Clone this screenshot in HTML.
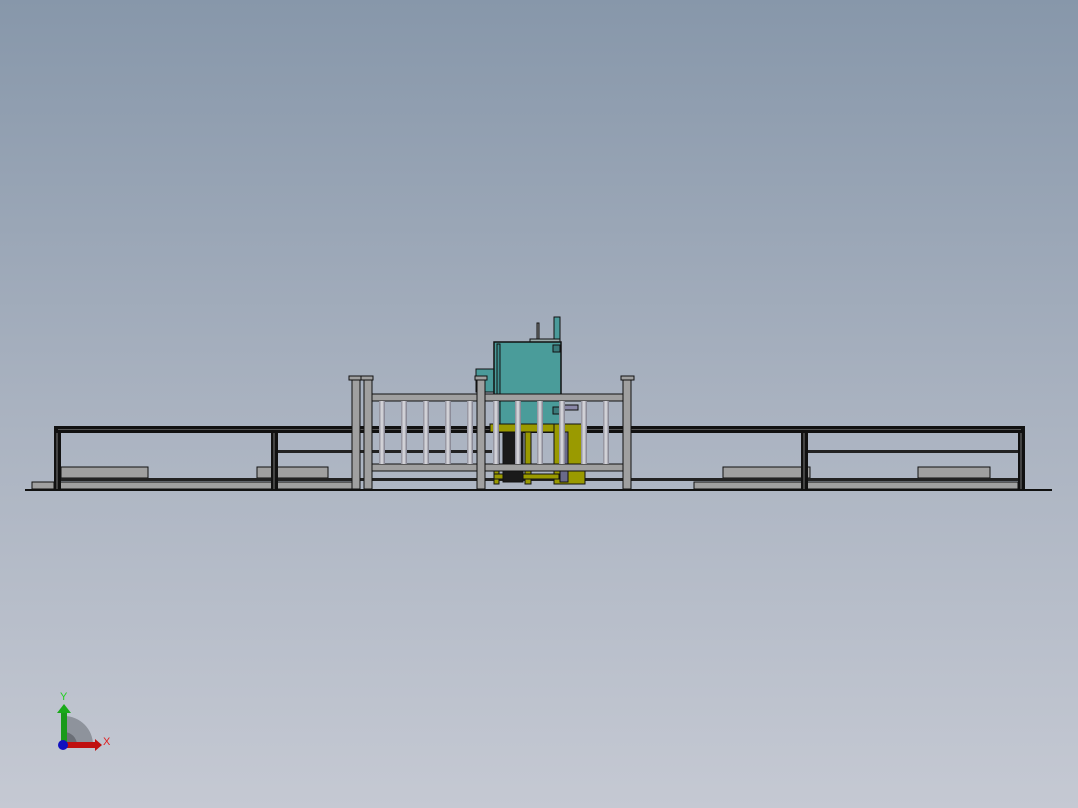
<!DOCTYPE html>
<html><head><style>
html,body{margin:0;padding:0}
body{width:1078px;height:808px;overflow:hidden;background:linear-gradient(#8797aa,#a9b2c0 50%,#c5c9d3)}
svg{position:absolute;left:0;top:0}
</style></head><body>
<svg width="1078" height="808" viewBox="0 0 1078 808">
<defs>
<linearGradient id="bar" x1="0" x2="1"><stop offset="0" stop-color="#8a8a96"/><stop offset="0.5" stop-color="#e0e0e4"/><stop offset="1" stop-color="#7a7a88"/></linearGradient>
</defs>
<g stroke="#111" stroke-width="1">
<!-- gray strips bottom -->
<rect x="32" y="482" width="22" height="7" fill="#a0a0a0"/>
<rect x="60" y="482" width="292" height="7" fill="#a0a0a0"/>
<rect x="694" y="482" width="324" height="7" fill="#a0a0a0"/>
<!-- pads -->
<rect x="61" y="467" width="87" height="11" fill="#a0a0a0"/>
<rect x="257" y="467" width="71" height="11" fill="#a0a0a0"/>
<rect x="723" y="467" width="87" height="11" fill="#a0a0a0"/>
<rect x="918" y="467" width="72" height="11" fill="#a0a0a0"/>
</g>
<!-- lower rails -->
<rect x="60" y="478" width="958" height="3" fill="#222"/>
<!-- mid rails -->
<rect x="277" y="450" width="215" height="3" fill="#222"/>
<rect x="808" y="450" width="210" height="3" fill="#222"/>
<!-- top rail -->
<rect x="54" y="426" width="971" height="7" fill="#111"/>
<rect x="58" y="429" width="963" height="1" fill="#555"/>
<!-- posts -->
<rect x="54" y="432" width="7" height="57" fill="#111"/><rect x="56" y="433" width="2" height="56" fill="#444"/>
<rect x="271" y="432" width="7" height="57" fill="#111"/><rect x="273" y="433" width="2" height="56" fill="#444"/>
<rect x="801" y="432" width="7" height="57" fill="#111"/><rect x="803" y="433" width="2" height="56" fill="#444"/>
<rect x="1018" y="432" width="7" height="57" fill="#111"/><rect x="1020" y="433" width="2" height="56" fill="#444"/>
<!-- machine -->
<g stroke="#111" stroke-width="1">
<rect x="554" y="317" width="6" height="23" fill="#4a9a9a"/>
<rect x="537" y="323" width="2" height="17" fill="#888"/>
<rect x="530" y="339" width="30" height="3" fill="#9aa"/>
<rect x="476" y="369" width="20" height="23" fill="#4a9a9a"/>
<rect x="494" y="342" width="67" height="83" fill="#4a9c9a" stroke-width="1.5"/>
<rect x="497" y="344" width="3" height="80" fill="#3f8f8f"/>
<rect x="553" y="345" width="7" height="7" fill="#3a7a7a"/>
<rect x="553" y="407" width="7" height="7" fill="#3a7a7a"/>
<rect x="562" y="405" width="16" height="5" fill="#8a88a8"/>
<rect x="490" y="424" width="95" height="8" fill="#9a9a00"/>
<rect x="494" y="432" width="5" height="52" fill="#9a9a00"/>
<rect x="525" y="432" width="6" height="52" fill="#9a9a00"/>
<rect x="554" y="424" width="31" height="60" fill="#9a9a00"/>
<rect x="494" y="474" width="65" height="5" fill="#9a9a00"/>
<rect x="503" y="432" width="20" height="50" fill="#1a1a1a"/>
<rect x="560" y="432" width="8" height="50" fill="#6a6a8a"/>
</g>
<!-- fence -->
<g fill="#a0a0a0" stroke="#111" stroke-width="1">
<rect x="372" y="394" width="251" height="7"/>
<rect x="372" y="464" width="251" height="7"/>
<rect x="352" y="379" width="8" height="110"/>
<rect x="364" y="379" width="8" height="110"/>
<rect x="349" y="376" width="13" height="4"/>
<rect x="361" y="376" width="12" height="4"/>
<rect x="477" y="379" width="8" height="110"/>
<rect x="475" y="376" width="12" height="4"/>
<rect x="623" y="379" width="8" height="110"/>
<rect x="621" y="376" width="13" height="4"/>
</g>
<g fill="url(#bar)">
<rect x="379" y="401" width="6" height="63"/><rect x="401" y="401" width="6" height="63"/><rect x="423" y="401" width="6" height="63"/><rect x="445" y="401" width="6" height="63"/><rect x="467" y="401" width="6" height="63"/>
<rect x="493" y="401" width="6" height="63"/><rect x="515" y="401" width="6" height="63"/><rect x="537" y="401" width="6" height="63"/><rect x="559" y="401" width="6" height="63"/><rect x="581" y="401" width="6" height="63"/><rect x="603" y="401" width="6" height="63"/>
</g>
<!-- ground -->
<rect x="25" y="489" width="1027" height="2" fill="#111"/>
<!-- axis gizmo -->
<path d="M64 745 L64 716 A29 29 0 0 1 93 745 Z" fill="#8e939c"/>
<path d="M64 745 L64 732 A13 13 0 0 1 77 745 Z" fill="#6a6e76"/>
<rect x="61" y="712" width="6" height="33" fill="#1a9a1a"/>
<path d="M57 713 L64 704 L71 713Z" fill="#1aaa1a"/>
<rect x="64" y="742" width="32" height="6" fill="#c01010"/>
<path d="M95 739 L102 745 L95 751Z" fill="#c01010"/>
<circle cx="63" cy="745" r="5" fill="#1010c0"/>
<text x="60" y="700" font-family="Liberation Sans,sans-serif" font-size="11" fill="#20d020">Y</text>
<text x="103" y="745" font-family="Liberation Sans,sans-serif" font-size="11" fill="#e02020">X</text>
</svg>
</body></html>
